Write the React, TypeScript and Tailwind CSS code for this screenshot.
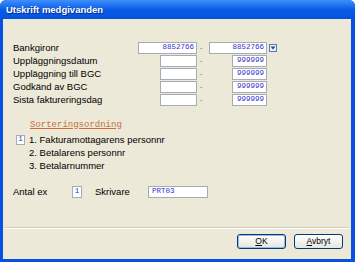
import React from "react";

const rows = [
  { label: "Bankgironr", from: "8852766", to: "8852766", wide: true },
  { label: "Uppläggningsdatum", from: "", to: "999999" },
  { label: "Uppläggning till BGC", from: "", to: "999999" },
  { label: "Godkänd av BGC", from: "", to: "999999" },
  { label: "Sista faktureringsdag", from: "", to: "999999" },
];

const sortOptions = [
  "1. Fakturamottagarens personnr",
  "2. Betalarens personnr",
  "3. Betalarnummer",
];

function Field({ value, className }: { value: string; className: string }) {
  return (
    <div
      className={`h-[12px] bg-white border border-[#a5acb5] flex items-center justify-end pr-[2px] font-['Liberation_Mono',monospace] text-[7.5px] leading-none text-[#3333cc] ${className}`}
    >
      {value}
    </div>
  );
}

export default function App() {
  return (
    <div className="w-[355px] h-[262px] flex flex-col bg-[#0850e0] rounded-t-[6px] overflow-hidden font-['Liberation_Sans',Arial,sans-serif]">
      {/* Title bar */}
      <div className="h-[19px] shrink-0 flex items-center pl-[6px] bg-gradient-to-b from-[#3d8ffa] via-[#0a5ce8] to-[#0453dd]">
        <span className="text-white font-bold text-[9.5px] leading-none [text-shadow:1px_1px_0_#0a2a8a]">
          Utskrift medgivanden
        </span>
      </div>

      {/* Body */}
      <div className="flex-1 ml-[3px] mr-[4px] mb-[3px] bg-[#ece9d8] flex flex-col text-[9.5px] text-black">
        <div className="pl-[10px] pt-[22px] flex flex-col">
          {rows.map((r) => (
            <div key={r.label} className="h-[13px] flex items-center">
              <span className="w-[125px] leading-none">{r.label}</span>
              <div className="w-[59px] flex justify-end">
                <Field value={r.from} className={r.wide ? "w-[59px]" : "w-[37px]"} />
              </div>
              <div className="w-[12px] pl-[3px] text-[7px] text-[#666] leading-none">-</div>
              <div className="w-[58px] flex justify-end">
                <Field value={r.to} className={r.wide ? "w-[58px]" : "w-[35px]"} />
              </div>
              {r.wide && (
                <div className="ml-[2px] w-[8px] h-[8px] border border-[#5a7bb5] bg-[#e8eefa] flex items-center justify-center">
                  <svg width="6" height="4" viewBox="0 0 6 4">
                    <path d="M0.5 0.5 L3 3.5 L5.5 0.5 Z" fill="#2a4a8a" />
                  </svg>
                </div>
              )}
            </div>
          ))}
        </div>

        {/* Sort order */}
        <div className="pl-[27px] mt-[13px] h-[12px] flex items-center">
          <span className="font-['Liberation_Mono',monospace] text-[9px] leading-none text-[#c8703a] underline">
            Sorteringsordning
          </span>
        </div>
        <div className="mt-[2px] flex flex-col">
          {sortOptions.map((o, i) => (
            <div key={o} className="h-[13px] flex items-center pl-[13px]">
              <div className="w-[10px] flex">
                {i === 0 && (
                  <div className="w-[9px] h-[10px] bg-white border border-[#a5acb5] flex items-center justify-center font-['Liberation_Mono',monospace] text-[7.5px] text-[#3333cc] leading-none">
                    1
                  </div>
                )}
              </div>
              <span className="ml-[3px] leading-none">{o}</span>
            </div>
          ))}
        </div>

        {/* Antal ex / Skrivare */}
        <div className="mt-[14px] h-[12px] flex items-center pl-[10px]">
          <span className="w-[59px] leading-none">Antal ex</span>
          <div className="w-[10px] h-[12px] bg-white border border-[#a5acb5] flex items-center justify-center font-['Liberation_Mono',monospace] text-[7.5px] text-[#3333cc] leading-none">
            1
          </div>
          <span className="ml-[13px] w-[53px] leading-none">Skrivare</span>
          <div className="w-[60px] h-[12px] bg-white border border-[#a5acb5] flex items-center pl-[3px] font-['Liberation_Mono',monospace] text-[7.5px] text-[#3333cc] leading-none">
            PRT03
          </div>
        </div>

        {/* Separator */}
        <div className="mt-[29px] mx-[2px] border-t border-[#d0cdbe] border-b border-b-white h-[2px]" />

        {/* Buttons */}
        <div className="mt-[5px] flex justify-end gap-[8px] pr-[8px]">
          <button className="w-[49px] h-[15px] rounded-[3px] border border-[#003c74] bg-gradient-to-b from-white to-[#e6e5de] shadow-[inset_0_0_0_1px_#9cb6ea] text-[8.5px] leading-none">
            <span className="underline">O</span>K
          </button>
          <button className="w-[49px] h-[15px] rounded-[3px] border border-[#003c74] bg-gradient-to-b from-white to-[#e6e5de] text-[8.5px] leading-none">
            <span className="underline">A</span>vbryt
          </button>
        </div>
      </div>
    </div>
  );
}
